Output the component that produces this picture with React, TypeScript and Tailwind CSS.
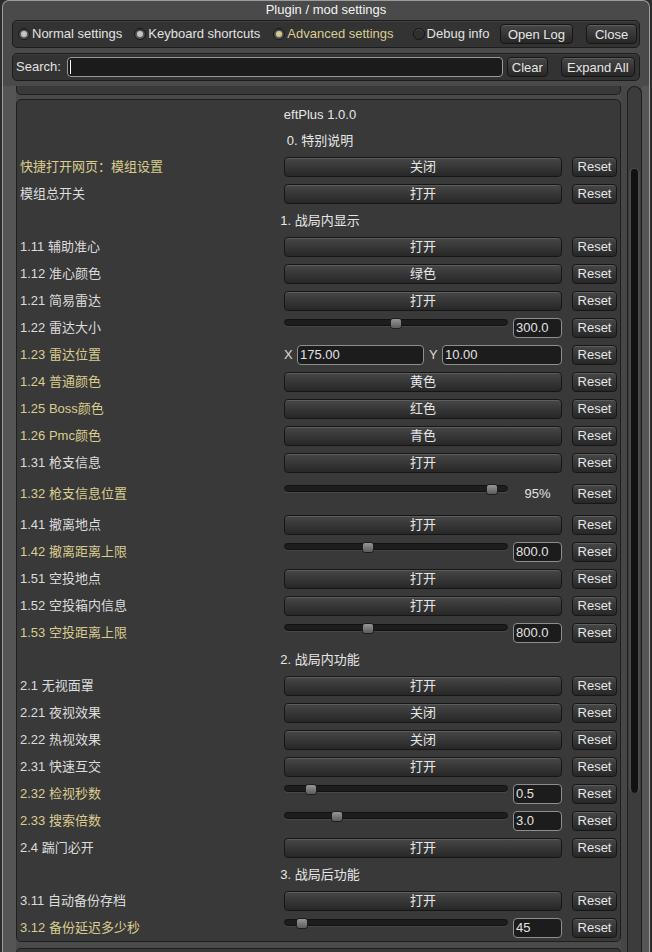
type Row =
  | { kind: "title"; text: string }
  | { kind: "header"; text: string }
  | { kind: "button"; label: string; value: string; hl?: boolean }
  | { kind: "slider"; label: string; pos: number; value: string; hl?: boolean; pct?: boolean }
  | { kind: "xy"; label: string; x: string; y: string; hl?: boolean };

const rows: Row[] = [
  { kind: "title", text: "eftPlus 1.0.0" },
  { kind: "header", text: "0. 特别说明" },
  { kind: "button", label: "快捷打开网页：模组设置", value: "关闭", hl: true },
  { kind: "button", label: "模组总开关", value: "打开" },
  { kind: "header", text: "1. 战局内显示" },
  { kind: "button", label: "1.11 辅助准心", value: "打开" },
  { kind: "button", label: "1.12 准心颜色", value: "绿色" },
  { kind: "button", label: "1.21 简易雷达", value: "打开" },
  { kind: "slider", label: "1.22 雷达大小", pos: 106, value: "300.0" },
  { kind: "xy", label: "1.23 雷达位置", x: "175.00", y: "10.00", hl: true },
  { kind: "button", label: "1.24 普通颜色", value: "黄色", hl: true },
  { kind: "button", label: "1.25 Boss颜色", value: "红色", hl: true },
  { kind: "button", label: "1.26 Pmc颜色", value: "青色", hl: true },
  { kind: "button", label: "1.31 枪支信息", value: "打开" },
  { kind: "slider", label: "1.32 枪支信息位置", pos: 202, value: "95%", hl: true, pct: true },
  { kind: "button", label: "1.41 撤离地点", value: "打开" },
  { kind: "slider", label: "1.42 撤离距离上限", pos: 78, value: "800.0", hl: true },
  { kind: "button", label: "1.51 空投地点", value: "打开" },
  { kind: "button", label: "1.52 空投箱内信息", value: "打开" },
  { kind: "slider", label: "1.53 空投距离上限", pos: 78, value: "800.0", hl: true },
  { kind: "header", text: "2. 战局内功能" },
  { kind: "button", label: "2.1 无视面罩", value: "打开" },
  { kind: "button", label: "2.21 夜视效果", value: "关闭" },
  { kind: "button", label: "2.22 热视效果", value: "关闭" },
  { kind: "button", label: "2.31 快速互交", value: "打开" },
  { kind: "slider", label: "2.32 检视秒数", pos: 21, value: "0.5", hl: true },
  { kind: "slider", label: "2.33 搜索倍数", pos: 47, value: "3.0", hl: true },
  { kind: "button", label: "2.4 踹门必开", value: "打开" },
  { kind: "header", text: "3. 战局后功能" },
  { kind: "button", label: "3.11 自动备份存档", value: "打开" },
  { kind: "slider", label: "3.12 备份延迟多少秒", pos: 12, value: "45", hl: true },
];

const btn =
  "flex items-center justify-center rounded-[4px] border border-[#161616] bg-linear-to-b from-[#474747] to-[#272727] text-[13px] leading-none text-[#e6e6e6] shadow-[inset_0_1px_0_rgba(255,255,255,0.13)]";

const field =
  "flex h-[20px] items-center rounded-[4px] border border-[#8e8e8e] bg-[#1c1c1c] pl-[2px] text-[13px] leading-none text-[#e2e2e2]";

const Radio = ({ dot }: { dot?: string }) => (
  <span className="flex h-[12px] w-[12px] items-center justify-center rounded-full border border-[#151515] bg-[#5a5a5a] shadow-[inset_0_1px_1px_rgba(0,0,0,0.5)]">
    {dot && <span className={`h-[6px] w-[6px] rounded-full ${dot}`} />}
  </span>
);

const Reset = () => <div className={`${btn} ml-[10px] h-[20px] w-[45px]`}>Reset</div>;

const Slider = ({ pos }: { pos: number }) => (
  <div className="relative mb-[10px] flex h-[10px] w-[224px] items-center">
    <div className="h-[7px] w-full rounded-full border border-[#111] bg-[#1d1d1d] shadow-[0_1px_0_rgba(255,255,255,0.08)]" />
    <div
      className="absolute top-0 h-[11px] w-[12px] rounded-[3px] border border-[#1e1e1e] bg-linear-to-b from-[#979797] to-[#5c5c5c]"
      style={{ left: pos }}
    />
  </div>
);

const SettingRow = ({ row }: { row: Row }) => {
  if (row.kind === "title")
    return <div className="flex h-[27px] items-center justify-center pt-[3px] text-[13px] text-[#e6e6e6]">{row.text}</div>;
  if (row.kind === "header")
    return <div className="flex h-[26px] items-center justify-center pt-[2px] text-[13px] text-[#e6e6e6]">{row.text}</div>;

  const tall = row.kind === "slider" && row.pct;
  return (
    <div className={`flex items-center ${tall ? "h-[35px]" : "h-[27px]"}`}>
      <div className={`w-[264px] text-[13px] ${row.hl ? "text-[#d9cd8f]" : "text-[#dcdcdc]"}`}>{row.label}</div>
      <div className="flex w-[278px] items-center">
        {row.kind === "button" && <div className={`${btn} h-[20px] w-full`}>{row.value}</div>}
        {row.kind === "slider" && (
          <>
            <Slider pos={row.pos} />
            {row.pct ? (
              <div className="ml-[5px] w-[49px] text-center text-[13px] text-[#e2e2e2]">{row.value}</div>
            ) : (
              <div className={`${field} ml-[5px] w-[49px]`}>{row.value}</div>
            )}
          </>
        )}
        {row.kind === "xy" && (
          <>
            <span className="w-[13px] text-[13px] text-[#dcdcdc]">X</span>
            <div className={`${field} w-[127px]`}>{row.x}</div>
            <span className="ml-[5px] w-[13px] text-[13px] text-[#dcdcdc]">Y</span>
            <div className={`${field} w-[120px]`}>{row.y}</div>
          </>
        )}
      </div>
      <Reset />
    </div>
  );
};

export default function App() {
  return (
    <div className="h-[952px] w-[652px] overflow-hidden bg-[#2c2c2c] font-['Liberation_Sans','Noto_Sans_CJK_SC',sans-serif]">
      <div className="ml-[2px] flex h-full w-[648px] flex-col rounded-t-[7px] border border-b-0 border-[#9c9c9c] bg-[#4a4a4a]">
        {/* Title */}
        <div className="flex h-[18px] shrink-0 items-center justify-center text-[13px] text-[#f2f2f2]">Plugin / mod settings</div>

        {/* Tabs */}
        <div className="mx-[9px] mt-[1px] flex h-[28px] shrink-0 items-center rounded-[5px] border border-[#1c1c1c] bg-[#333] pl-[5px] pr-[2px] text-[13px] text-[#e2e2e2] shadow-[inset_0_1px_0_rgba(255,255,255,0.06)]">
          <Radio dot="bg-[#c4c4c4]" />
          <span className="ml-[2px]">Normal settings</span>
          <span className="ml-[12px]"><Radio dot="bg-[#c4c4c4]" /></span>
          <span className="ml-[2px]">Keyboard shortcuts</span>
          <span className="ml-[13px]"><Radio dot="bg-[#d4c98c]" /></span>
          <span className="ml-[2px] text-[#d9cd8f]">Advanced settings</span>
          <span className="ml-[19px]">
            <span className="flex h-[12px] w-[12px] rounded-full border border-[#151515] bg-[#2f2f2f] shadow-[inset_0_1px_0_rgba(255,255,255,0.15)]" />
          </span>
          <span className="ml-[2px]">Debug info</span>
          <div className={`${btn} ml-auto h-[20px] w-[73px]`}>Open Log</div>
          <div className={`${btn} ml-[13px] h-[20px] w-[51px]`}>Close</div>
        </div>

        {/* Search */}
        <div className="mx-[9px] mt-[5px] flex h-[28px] shrink-0 items-center rounded-[5px] border border-[#1c1c1c] bg-[#333] pl-[3px] pr-[2px] text-[13px] text-[#e2e2e2] shadow-[inset_0_1px_0_rgba(255,255,255,0.06)]">
          <span>Search:</span>
          <div className="ml-[6px] flex h-[20px] w-[436px] items-center rounded-[4px] border border-[#9a9a9a] bg-[#1b1b1b] pl-[2px]">
            <span className="h-[14px] w-[1px] bg-white" />
          </div>
          <div className={`${btn} ml-[4px] h-[20px] w-[41px]`}>Clear</div>
          <div className={`${btn} ml-[13px] h-[20px] w-[74px]`}>Expand All</div>
        </div>

        {/* Scroll view */}
        <div className="mt-[5px] flex min-h-0 flex-1">
          <div className="w-[13px] bg-[#555]" />
          <div className="flex w-[605px] flex-col">
            <div className="h-[9px] shrink-0 rounded-b-[5px] border border-t-0 border-[#1e1e1e] bg-[#393939]" />
            <div className="mt-[4px] shrink-0 rounded-[5px] border border-[#1e1e1e] bg-[#393939] pl-[3px]">
              {rows.map((row, i) => (
                <SettingRow key={i} row={row} />
              ))}
            </div>
            <div className="mt-[6px] h-[20px] shrink-0 rounded-t-[5px] border border-b-0 border-[#1e1e1e] bg-[#393939]" />
          </div>
          <div className="w-[6px] bg-[#464646]" />
          <div className="flex w-[15px] flex-col rounded-t-full border border-b-0 border-[#1e1e1e] bg-[#3c3c3c] px-[1px] pt-[81px]">
            <div className="h-[625px] shrink-0 rounded-[5px] border-x-2 border-t border-[#4a4a4a] bg-[#111]" />
          </div>
          <div className="flex-1 bg-[#555]" />
        </div>
      </div>
    </div>
  );
}
